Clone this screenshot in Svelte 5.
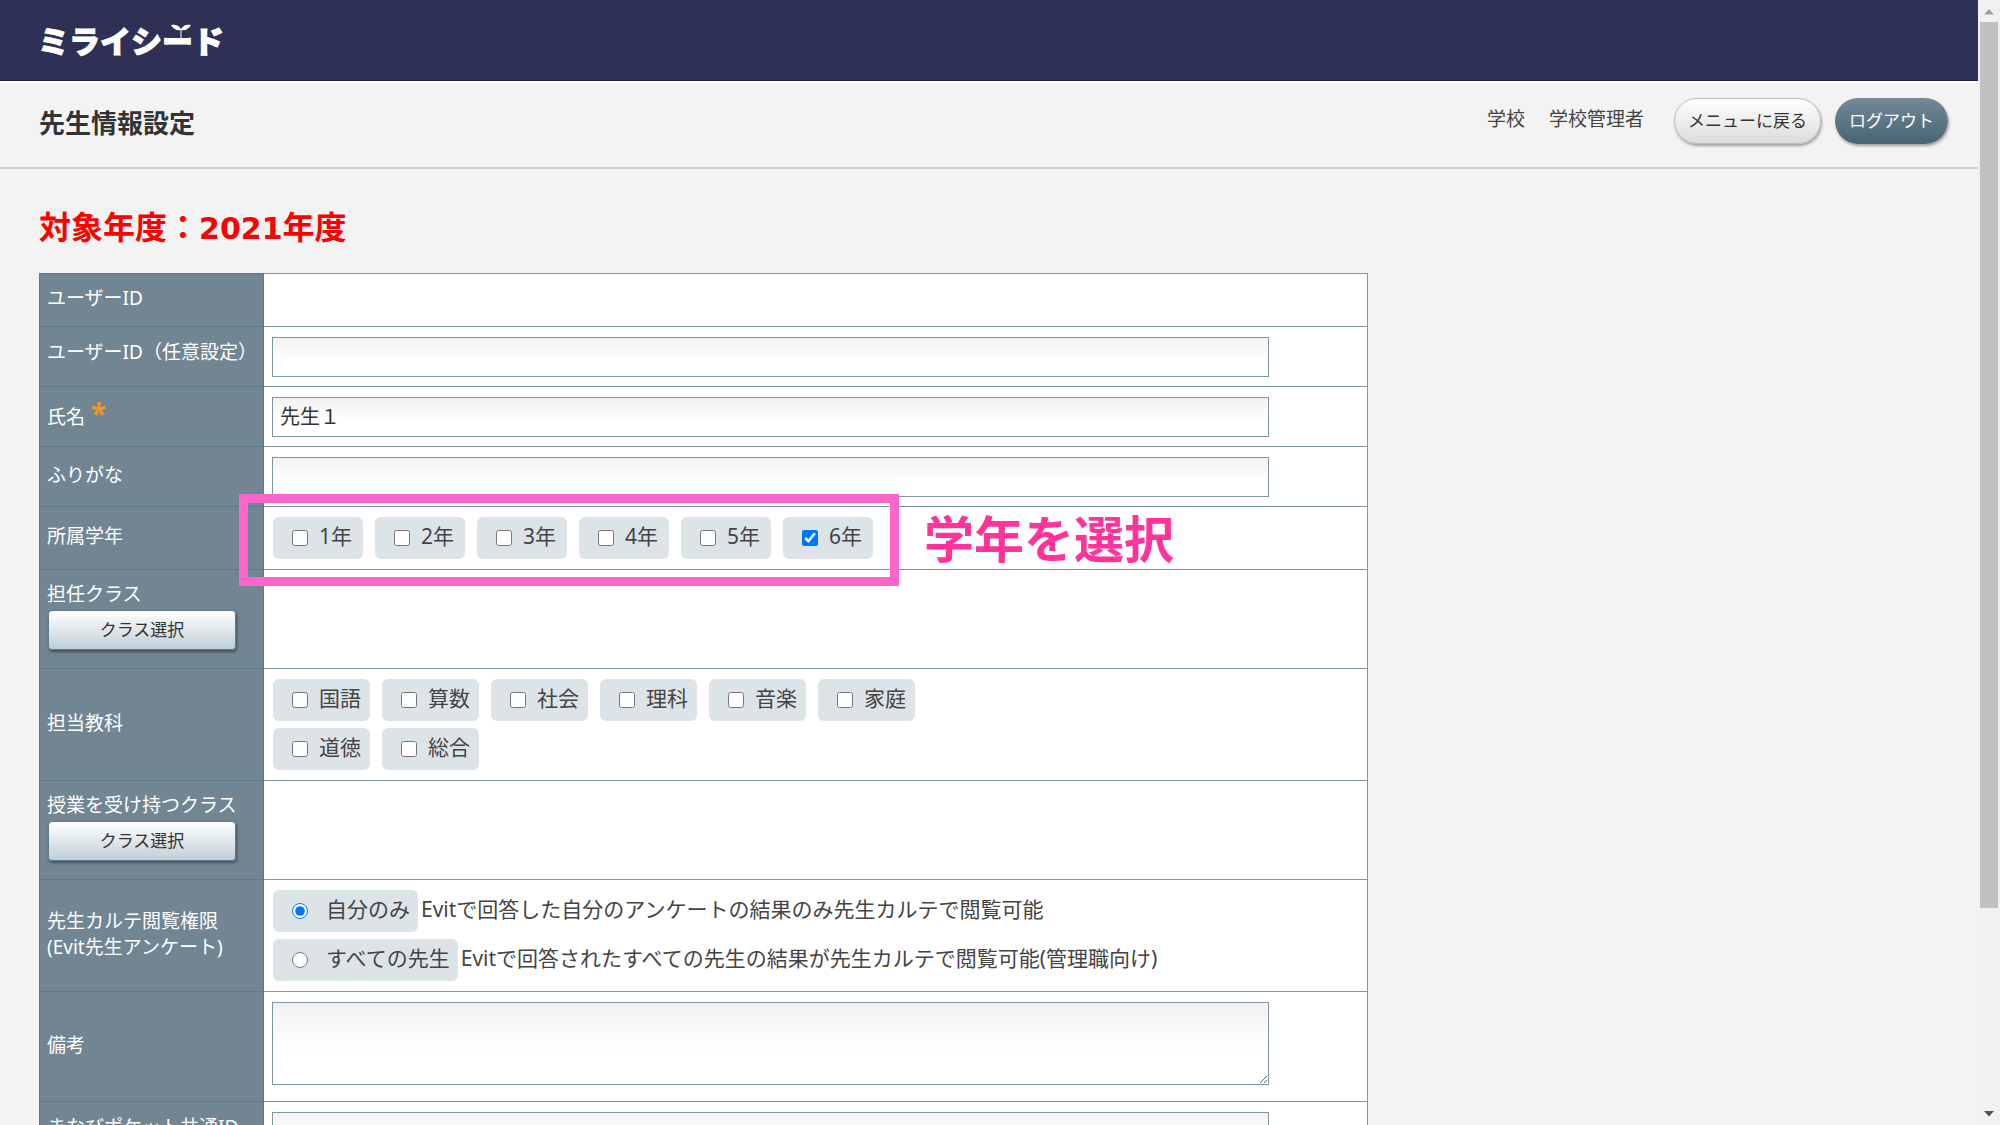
<script lang="ts">
	interface Option {
		label: string;
		checked: boolean;
	}

	const toOptions = (labels: string[]): Option[] =>
		labels.map((label) => ({ label, checked: false }));

	let customId = $state('');
	let name = $state('先生１');
	let furigana = $state('');
	let remarks = $state('');
	let pocketId = $state('');
	let permission = $state('self');

	let grades = $state(toOptions(['1年', '2年', '3年', '4年', '5年', '6年']));
	grades[5].checked = true;

	// Six subjects on the first line, the rest below
	let subjectRows = $state([
		toOptions(['国語', '算数', '社会', '理科', '音楽', '家庭']),
		toOptions(['道徳', '総合'])
	]);

	const permissions = [
		{
			value: 'self',
			label: '自分のみ',
			note: 'Evitで回答した自分のアンケートの結果のみ先生カルテで閲覧可能'
		},
		{
			value: 'all',
			label: 'すべての先生',
			note: 'Evitで回答されたすべての先生の結果が先生カルテで閲覧可能(管理職向け)'
		}
	];
</script>

{#snippet checks(options: Option[])}
	<div class="chips">
		{#each options as option}
			<label class="chip">
				<input type="checkbox" bind:checked={option.checked} />
				<span>{option.label}</span>
			</label>
		{/each}
	</div>
{/snippet}

<div class="window">
	<div class="page">
		<header class="brand-bar">
			<div class="logo">
				ミライシード
				<svg class="sprout" viewBox="0 0 20 14" aria-hidden="true">
					<path d="M0 1C4 0 8 1 10 5C12 1 16 0 20 1C18 5 14 7 10 6C6 7 2 5 0 1Z" fill="#fff" />
					<path d="M10 5V14" stroke="#fff" stroke-width="1" />
				</svg>
			</div>
		</header>

		<div class="title-bar">
			<h1>先生情報設定</h1>
			<div class="account">
				<span>学校</span>
				<span>学校管理者</span>
				<button type="button" class="pill light">メニューに戻る</button>
				<button type="button" class="pill dark">ログアウト</button>
			</div>
		</div>

		<main>
			<h2>対象年度：<span>2021</span>年度</h2>

			<table>
				<tbody>
					<tr class="plain">
						<th scope="row">ユーザーID</th>
						<td></td>
					</tr>
					<tr>
						<th scope="row" class="raised">
							<label for="custom-id">ユーザーID（任意設定）</label>
						</th>
						<td><input id="custom-id" class="field" type="text" bind:value={customId} /></td>
					</tr>
					<tr>
						<th scope="row"><label for="name">氏名<b class="required">*</b></label></th>
						<td><input id="name" class="field" type="text" bind:value={name} /></td>
					</tr>
					<tr>
						<th scope="row"><label for="furigana">ふりがな</label></th>
						<td><input id="furigana" class="field" type="text" bind:value={furigana} /></td>
					</tr>
					<tr>
						<th scope="row">所属学年</th>
						<td class="marked">
							{@render checks(grades)}
							<div class="callout">
								<div class="callout-box"></div>
								<strong>学年を選択</strong>
							</div>
						</td>
					</tr>
					<tr>
						<th scope="row" class="with-button">
							担任クラス
							<button type="button" class="select-class">クラス選択</button>
						</th>
						<td></td>
					</tr>
					<tr>
						<th scope="row">担当教科</th>
						<td>
							<div class="lines">
								{#each subjectRows as row}
									{@render checks(row)}
								{/each}
							</div>
						</td>
					</tr>
					<tr>
						<th scope="row" class="with-button">
							授業を受け持つクラス
							<button type="button" class="select-class">クラス選択</button>
						</th>
						<td></td>
					</tr>
					<tr>
						<th scope="row">先生カルテ閲覧権限<br />(Evit先生アンケート)</th>
						<td>
							<div class="lines">
								{#each permissions as item}
									<div class="permission">
										<label class="chip radio">
											<input
												type="radio"
												name="permission"
												value={item.value}
												bind:group={permission}
											/>
											<span>{item.label}</span>
										</label>
										<span class="note">{item.note}</span>
									</div>
								{/each}
							</div>
						</td>
					</tr>
					<tr>
						<th scope="row"><label for="remarks">備考</label></th>
						<td class="tall"><textarea id="remarks" class="field" bind:value={remarks}></textarea></td>
					</tr>
					<tr>
						<th scope="row" class="raised">
							<label for="pocket-id">まなびポケット共通ID</label>
						</th>
						<td><input id="pocket-id" class="field" type="text" bind:value={pocketId} /></td>
					</tr>
				</tbody>
			</table>
		</main>
	</div>

	<div class="scrollbar" aria-hidden="true">
		<svg viewBox="0 0 22 22"><path d="M6 14.5L11 9L16 14.5Z" fill="#a0a0a0" /></svg>
		<div class="track"><div class="thumb"></div></div>
		<svg viewBox="0 0 22 22"><path d="M6 8L11 13.5L16 8Z" fill="#505050" /></svg>
	</div>
</div>

<style>
	:global(body) {
		margin: 0;
		background: #f3f3f3;
	}

	.window {
		display: flex;
		height: 100vh;
		overflow: hidden;
		color: #444;
		font-family: 'Noto Sans', 'Noto Sans CJK JP', sans-serif;
		font-size: 21px;
		line-height: 26px;
	}

	.window * {
		box-sizing: border-box;
	}

	button,
	input,
	textarea {
		font-family: inherit;
	}

	.page {
		flex: 1;
		min-width: 0;
		overflow: hidden;
	}

	/* Header */
	.brand-bar {
		display: flex;
		align-items: center;
		height: 81px;
		padding: 0 38px;
		background: #2e3056;
		border-bottom: 1px solid #1d1e47;
	}

	.logo {
		position: relative;
		color: #fff;
		font-family: 'Noto Sans CJK JP', sans-serif;
		font-size: 31px;
		font-weight: 900;
		line-height: 40px;
		-webkit-text-stroke: 1px #fff;
	}

	.sprout {
		position: absolute;
		top: 4px;
		left: 133px;
		width: 20px;
		height: 14px;
	}

	.title-bar {
		display: flex;
		align-items: center;
		justify-content: space-between;
		height: 88px;
		padding: 0 30px 4px 39px;
		border-top: 2px solid #fff;
		border-bottom: 2px solid #c5d3d9;
	}

	h1 {
		margin: 0;
		color: #333;
		font-size: 26px;
		line-height: 36px;
	}

	.account {
		display: flex;
		align-items: center;
		padding-bottom: 4px;
		font-size: 19px;
	}

	.account span {
		margin-right: 24px;
		padding-bottom: 4px;
	}

	.account span + span {
		margin-right: 30px;
	}

	.pill {
		height: 46px;
		padding: 0 14px 4px;
		border-radius: 23px;
		font-size: 17px;
		box-shadow: 1px 2px 3px rgba(0, 0, 0, 0.35);
	}

	.pill.light {
		margin-right: 14px;
		padding: 0 13px 4px;
		color: #333;
		background: linear-gradient(#fff, #dcdcdc);
		border: 1px solid #bbb;
	}

	.pill.dark {
		color: #fff;
		background: linear-gradient(#748a97, #486373);
		border: 0;
	}

	/* Form */
	main {
		padding: 36px 40px 0 39px;
	}

	h2 {
		margin: 0 0 23px;
		color: #f00;
		font-size: 32px;
		line-height: 43px;
	}

	h2 span {
		font-family: 'DejaVu Sans', sans-serif;
		font-size: 30px;
	}

	table {
		width: 70%;
		border-collapse: collapse;
		background: #fff;
	}

	th,
	td {
		border: 1px solid #7d94a1;
	}

	th {
		width: 224px;
		padding: 0 0 4px 7px;
		color: #fff;
		background: #718692;
		border-color: #5c7686;
		font-size: 19px;
		font-weight: normal;
		text-align: left;
		white-space: nowrap;
	}

	td {
		padding: 10px 0 9px 8px;
	}

	.plain {
		height: 53px;
	}

	.raised {
		padding-bottom: 10px;
	}

	.required {
		margin-left: 6px;
		color: #f7931e;
		font-size: 28px;
	}

	.with-button {
		padding: 11px 0 18px 7px;
	}

	.select-class {
		display: block;
		width: 188px;
		height: 40px;
		margin: 3px 0 0 1px;
		padding: 0 0 4px;
		color: #333;
		background: linear-gradient(#fff, #bfcfd7);
		border: 1px solid #5f7b8a;
		border-radius: 4px;
		font-size: 17px;
		box-shadow: 1px 2px 3px rgba(0, 0, 0, 0.4);
	}

	.field {
		display: block;
		width: 91%;
		height: 40px;
		padding: 0 7px 4px;
		color: #333;
		background: linear-gradient(#f2f2f2, #fff 60%);
		border: 1px solid #7d94a1;
		border-radius: 0;
		font-size: 20px;
	}

	textarea.field {
		height: 83px;
		resize: both;
	}

	.tall {
		padding-bottom: 16px;
	}

	.lines {
		display: flex;
		flex-direction: column;
		gap: 7px;
	}

	.chips {
		display: flex;
		gap: 12px;
	}

	.chips,
	.permission {
		padding: 0 1px;
	}

	.chip {
		display: flex;
		align-items: center;
		gap: 11px;
		min-width: 90px;
		height: 42px;
		padding: 0 9px 0 19px;
		background: #dde4e8;
		border-radius: 6px;
	}

	.chip span,
	.note {
		padding-bottom: 4px;
	}

	.chip input {
		width: 16px;
		height: 16px;
		margin: 0;
	}

	.chip.radio {
		gap: 18px;
		padding-right: 8px;
	}

	.marked,
	.lines {
		margin-bottom: 1px;
	}

	.marked {
		position: relative;
		padding-bottom: 10px;
	}

	.permission {
		display: flex;
		align-items: center;
		gap: 3px;
		white-space: nowrap;
	}

	/* Highlight over the grade row */
	.callout {
		position: absolute;
		top: -13px;
		left: -25px;
		display: flex;
		align-items: center;
		gap: 25px;
		pointer-events: none;
	}

	.callout-box {
		width: 660px;
		height: 92px;
		border: 9px solid #ff66cc;
	}

	.callout strong {
		padding-bottom: 2px;
		color: #ff3399;
		font-size: 50px;
		line-height: 60px;
		white-space: nowrap;
	}

	/* Scrollbar */
	.scrollbar {
		display: flex;
		flex-direction: column;
		width: 22px;
		background: #f1f1f1;
	}

	.scrollbar svg {
		width: 22px;
		height: 22px;
	}

	.track {
		flex: 1;
		padding: 0 2px;
	}

	.thumb {
		height: 82%;
		background: #c1c1c1;
	}
</style>
